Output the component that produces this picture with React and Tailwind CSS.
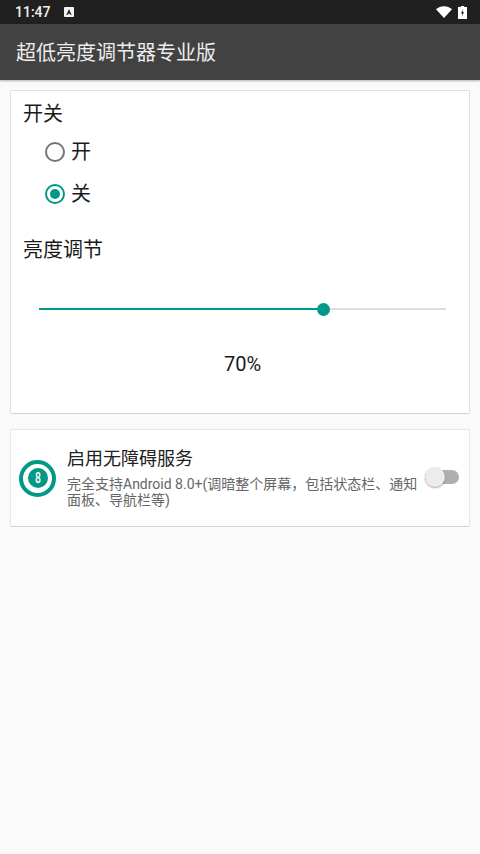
const FONT = "font-['Roboto','Noto_Sans_CJK_SC',sans-serif]";

function StatusBar() {
  return (
    <div className="flex h-6 items-center justify-between bg-[#202020] pl-[15px] pr-[13px]">
      <div className="flex items-center gap-[13px]">
        <span className="text-[14px] font-medium leading-6 text-[#f0f0f0]">11:47</span>
        <svg width="10" height="10" viewBox="0 0 10 10">
          <rect width="10" height="10" rx="1" fill="#f2f2f2" />
          <path d="M5 2 L7.6 8 H6.4 L5.9 6.7 H4.1 L3.6 8 H2.4 Z" fill="#202020" />
        </svg>
      </div>
      <div className="flex items-center gap-[6px]">
        <svg width="16" height="12" viewBox="0 0 16 12">
          <path d="M0 3.2 C4.4 -0.9 11.6 -0.9 16 3.2 L8 12 Z" fill="#ffffff" />
        </svg>
        <svg width="9" height="13" viewBox="0 0 9 13">
          <path d="M2.8 0 H6.2 V1 H9 V13 H0 V1 H2.8 Z" fill="#ffffff" />
          <path d="M5.2 3 L3 7.4 H4.3 L3.8 10.5 L6 6 H4.7 Z" fill="#202020" />
        </svg>
      </div>
    </div>
  );
}

function Radio({ label, checked }) {
  return (
    <div className="flex h-[42px] items-center pl-[34px]">
      <div
        className={`flex h-5 w-5 items-center justify-center rounded-full border-2 ${
          checked ? "border-[#009987]" : "border-[#757575]"
        }`}
      >
        {checked && <div className="h-[10px] w-[10px] rounded-full bg-[#009987]" />}
      </div>
      <span className="ml-[6px] text-[20px] leading-6 text-[#1a1a1a]">{label}</span>
    </div>
  );
}

function BrightnessCard() {
  return (
    <div className="mx-[10px] mt-[10px] h-[324px] rounded-[2px] border border-[#e0e0e0] border-b-[#d4d4d4] bg-white">
      <div className="pl-3 pt-[11px] text-[20px] leading-6 text-[#1a1a1a]">开关</div>
      <div className="mt-[5px]">
        <Radio label="开" />
        <Radio label="关" checked />
      </div>
      <div className="mt-[23px] pl-3 text-[20px] leading-6 text-[#1a1a1a]">亮度调节</div>
      <div className="ml-[28px] mr-[23px]">
        {/* Slider */}
        <div className="relative mt-[41px] flex h-3 items-center">
          <div className="h-[2px] w-[70%] bg-[#009987]" />
          <div className="h-[2px] flex-1 bg-[#dddddd]" />
          <div className="absolute left-[70%] top-0 ml-[-7px] h-[13px] w-[13px] rounded-full bg-[#009987]" />
        </div>
        <div className="mt-[37px] text-center text-[20px] leading-6 text-[#1a1a1a]">70%</div>
      </div>
    </div>
  );
}

function ServiceCard() {
  return (
    <div className="mx-[10px] mt-[15px] flex h-[98px] items-center rounded-[2px] border border-[#e6e6e6] border-b-[#d4d4d4] bg-white pl-2 pr-[10px]">
      <div className="flex h-[37px] w-[37px] shrink-0 items-center justify-center rounded-full border-[4px] border-[#009987]">
        <div className="flex h-5 w-5 items-center justify-center rounded-full bg-[#009987]">
          <span className="scale-x-75 text-[14px] font-medium leading-none text-white">8</span>
        </div>
      </div>
      <div className="ml-[11px] w-[356px] shrink-0 pb-[2px]">
        <div className="text-[18px] leading-6 text-[#212121]">启用无障碍服务</div>
        <div className="mt-[5px] text-[14px] leading-[16px] text-[#666666]">
          完全支持Android 8.0+(调暗整个屏幕，包括状态栏、通知面板、导航栏等)
        </div>
      </div>
      {/* Switch */}
      <div className="relative ml-[2px] mt-[-3px] h-[14px] w-[34px] shrink-0 rounded-full bg-[#b0b0b0]">
        <div className="absolute left-0 top-[-3px] h-5 w-5 rounded-full bg-[#ececec] shadow-[0_1px_2px_rgba(0,0,0,0.35)]" />
      </div>
    </div>
  );
}

export default function App() {
  return (
    <div className={`h-[854px] w-[480px] overflow-hidden bg-[#fafafa] ${FONT}`}>
      <StatusBar />
      <div className="flex h-[56px] items-center bg-[#424242] pl-4 pt-[2px] text-[20px] text-[#eeeeee] shadow-[0_1px_2px_rgba(0,0,0,0.3)]">
        超低亮度调节器专业版
      </div>
      <BrightnessCard />
      <ServiceCard />
    </div>
  );
}
